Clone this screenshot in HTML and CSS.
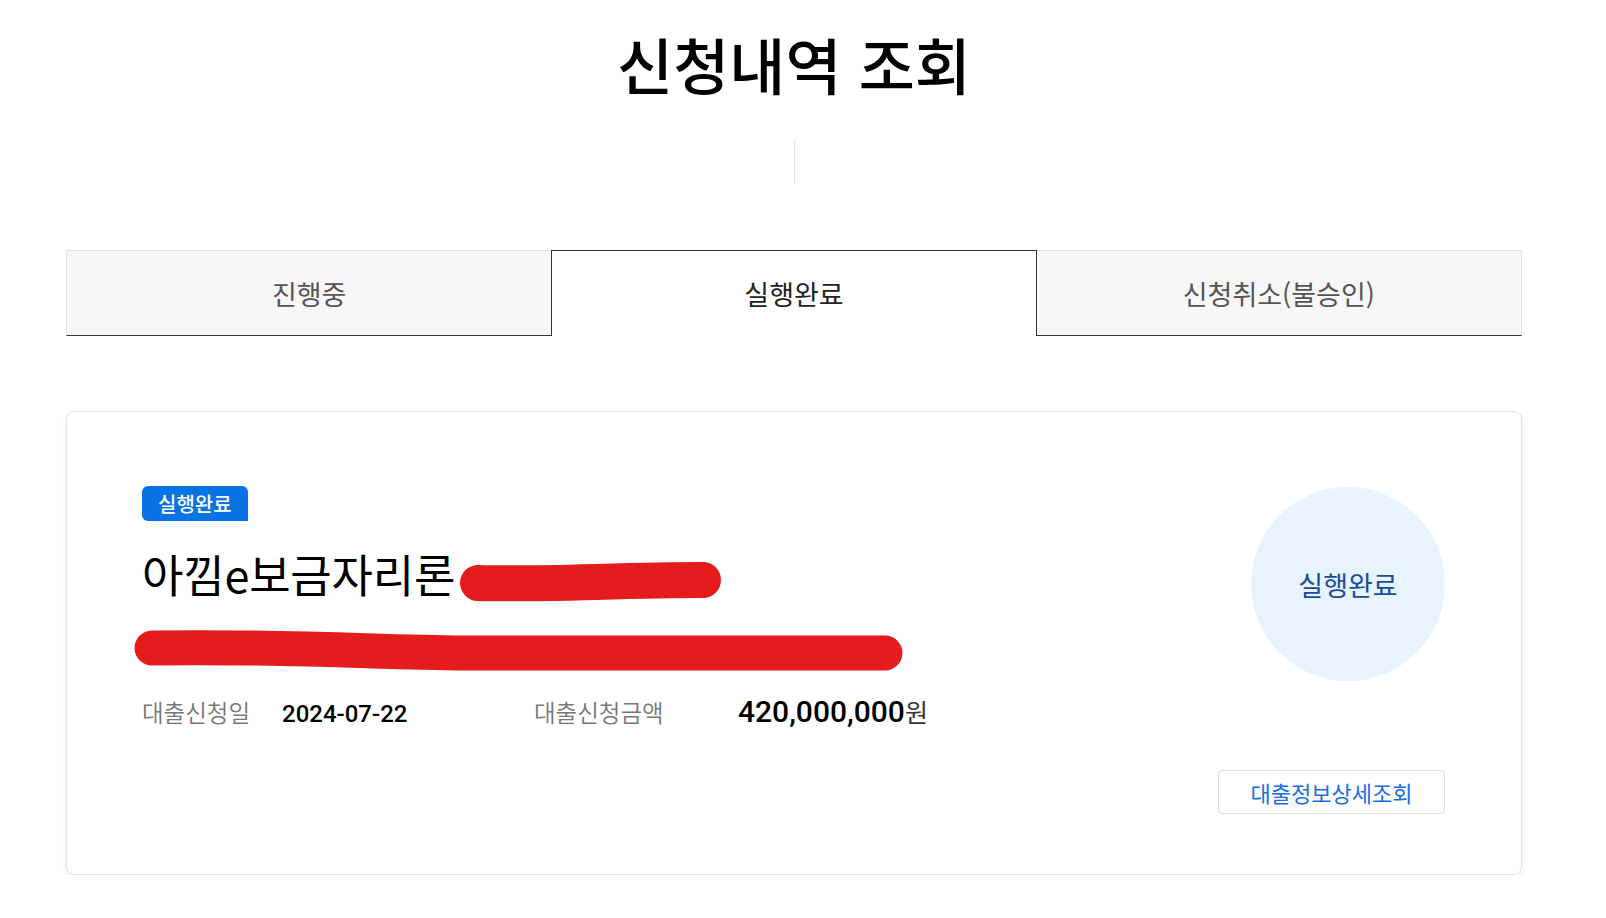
FILE: index.html
```html
<!DOCTYPE html>
<html lang="ko">
<head>
<meta charset="utf-8">
<title>신청내역 조회</title>
<link rel="stylesheet" href="styles.css">
</head>
<body>
<div class="page">
  <h1 class="page-title">신청내역 조회</h1>
  <div class="divider"></div>
  <div class="tabs">
    <div class="tab">진행중</div>
    <div class="tab tab-active">실행완료</div>
    <div class="tab tab-last">신청취소(불승인)</div>
  </div>
  <div class="card">
    <div class="card-main">
      <span class="badge">실행완료</span>
      <div class="loan-title">
        <span class="loan-name">아낌e보금자리론</span>
        <svg class="redact redact-1" width="264" height="44" viewBox="0 0 264 44"><path d="M19 24 C 80 26, 160 21, 244 21" stroke="#e51c1e" stroke-width="36" stroke-linecap="round" fill="none"/></svg>
      </div>
      <svg class="redact redact-2" width="772" height="44" viewBox="0 0 772 44"><path d="M19 19 C 150 17, 240 23, 330 24 L 752 24" stroke="#e51c1e" stroke-width="35" stroke-linecap="round" fill="none"/></svg>
      <div class="info-row">
        <span class="info-label">대출신청일</span>
        <span class="info-date">2024-07-22</span>
        <span class="info-label info-label-2">대출신청금액</span>
        <span class="info-amount">420,000,000</span><span class="info-unit">원</span>
      </div>
    </div>
    <div class="card-side">
      <div class="status-circle">실행완료</div>
      <button class="detail-btn">대출정보상세조회</button>
    </div>
  </div>
</div>
</body>
</html>
```
FILE: styles.css
```css
html, body {
  margin: 0;
  padding: 0;
  background: #fff;
}
body {
  font-family: "Noto Sans CJK KR", "Noto Sans", sans-serif;
  color: #111;
}
.page {
  width: 1456px;
  margin-left: 66px;
  padding-top: 22px;
}
.page-title {
  margin: 0;
  text-align: center;
  font-size: 61px;
  font-weight: 500;
  line-height: 84px;
  color: #000;
  letter-spacing: 0;
}
.divider {
  width: 1px;
  height: 44px;
  background: #e6e6e6;
  margin: 34px auto 0;
}
.tabs {
  display: grid;
  grid-template-columns: repeat(3, 1fr);
  margin-top: 66px;
  height: 86px;
}
.tab {
  display: flex;
  align-items: center;
  justify-content: center;
  background: #f7f7f7;
  border-top: 1px solid #e2e2e2;
  border-left: 1px solid #e2e2e2;
  border-bottom: 1px solid #333;
  font-size: 27px;
  color: #555;
  box-sizing: border-box;
}
.tab-last {
  border-right: 1px solid #e2e2e2;
}
.tab-active {
  background: #fff;
  border: 1px solid #333;
  border-bottom: none;
  color: #222;
}
.tab-active + .tab {
  border-left: none;
}
.card {
  margin-top: 75px;
  height: 464px;
  box-sizing: border-box;
  border: 1px solid #e3e3e3;
  border-radius: 8px;
  box-shadow: 0 2px 5px rgba(0, 0, 0, 0.07);
  padding: 74px 76px 60px 75px;
  display: flex;
  justify-content: space-between;
}
.card-main {
  display: flex;
  flex-direction: column;
  align-items: flex-start;
}
.badge {
  display: inline-block;
  height: 35px;
  line-height: 35px;
  padding: 0 16px;
  background: #0a73e4;
  color: #fff;
  font-size: 20px;
  font-weight: 500;
  border-radius: 6px 6px 0 6px;
}
.loan-title {
  display: flex;
  align-items: center;
  margin-top: 20px;
  height: 64px;
}
.loan-name {
  font-size: 45px;
  font-weight: 400;
  color: #000;
  letter-spacing: -0.2px;
}
.redact {
  display: block;
}
.redact-1 {
  margin-left: 4px;
  margin-top: 15px;
}
.redact-2 {
  margin-left: -9px;
  margin-top: 24px;
}
.info-row {
  display: flex;
  align-items: baseline;
  margin-top: 20px;
}
.info-label {
  font-size: 23.5px;
  font-weight: 350;
  color: #777;
  width: 140px;
}
.info-label-2 {
  width: 204px;
}
.info-date {
  font-family: Roboto, "Noto Sans CJK KR", sans-serif;
  font-size: 24px;
  font-weight: 500;
  color: #000;
  width: 252px;
}
.info-amount {
  font-family: Roboto, "Noto Sans CJK KR", sans-serif;
  font-size: 30px;
  font-weight: 500;
  color: #000;
}
.info-unit {
  font-size: 25px;
  color: #333;
}
.card-side {
  display: flex;
  flex-direction: column;
  justify-content: space-between;
  align-items: flex-end;
}
.status-circle {
  width: 194px;
  height: 194px;
  border-radius: 50%;
  background: #e8f3fe;
  color: #1a4c99;
  font-size: 27px;
  display: flex;
  align-items: center;
  justify-content: center;
  margin-top: 1px;
}
.detail-btn {
  width: 227px;
  height: 44px;
  border: 1px solid #dcdcdc;
  border-radius: 4px;
  background: #fff;
  color: #1a6fe0;
  font-family: "Noto Sans CJK KR", sans-serif;
  font-size: 22px;
  padding: 0;
  cursor: pointer;
}
```
